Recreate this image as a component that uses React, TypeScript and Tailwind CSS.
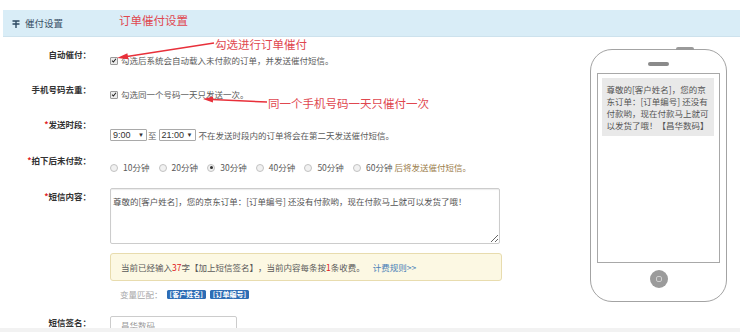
import React from 'react';

const Check = () => (
  <span className="inline-flex w-[8px] h-[8px] shrink-0 items-center justify-center rounded-[1px] border border-[#9a9a9a] bg-[#ececec]">
    <svg viewBox="0 0 8 8" className="w-[7px] h-[7px]">
      <path d="M1.4 4.2 L3.2 6 L6.6 1.6" stroke="#222" strokeWidth="1.4" fill="none" />
    </svg>
  </span>
);

const Radio = ({ on }: { on?: boolean }) => (
  <span className="inline-flex w-[8px] h-[8px] shrink-0 items-center justify-center rounded-full border border-[#c2c2c2] bg-[#f1f1f1]">
    {on && <span className="w-[3px] h-[3px] rounded-full bg-[#333]" />}
  </span>
);

const Select = ({ value }: { value: string }) => (
  <div className="flex items-center justify-between w-[37px] h-[12px] border border-[#a9a9a9] rounded-[1px] px-[2px] font-['Liberation_Sans',sans-serif] text-[9px] leading-[10px] text-[#333]">
    <span>{value}</span>
    <span className="text-[6px]">▼</span>
  </div>
);

const Label = ({ text, req, pt }: { text: string; req?: boolean; pt: string }) => (
  <div className={`text-right pr-[1px] font-bold text-[#333] ${pt}`}>
    {req && <span className="text-[#e02020]">*</span>}
    {text}
  </div>
);

const minutes = ['10', '20', '30', '40', '50'];

export default function App() {
  return (
    <div className="relative w-[740px] h-[332px] overflow-hidden bg-white text-[#5a5a5a] font-['Noto_Sans_CJK_SC',sans-serif] [text-spacing-trim:space-all]">
      <div className="mt-[10px] ml-[3px] h-[27px] flex items-center pl-[9px] bg-[#d9edf7] border-b border-[#cde2ed]">
        <svg viewBox="0 0 8 9" className="w-[8px] h-[9px]">
          <path d="M0.5 2 H7.5 M0.5 5 H7.5 M4 2 V9" stroke="#2e4a62" strokeWidth="1.4" fill="none" />
        </svg>
        <span className="ml-[5px] text-[9.5px] text-[#3b5268]">催付设置</span>
        <span className="ml-[56px] -mt-[4px] text-[11.5px] text-[#e0474f]">订单催付设置</span>
      </div>

      <div className="flex">
        <div className="w-[590px] text-[8.5px] leading-[11px]">
          <div className="grid grid-cols-[92px_1fr] gap-x-[18px] h-[35px]">
            <Label text="自动催付：" pt="pt-[12px]" />
            <div className="pt-[18px] flex items-center gap-[3px] h-[29px]">
              <Check />
              <span>勾选后系统会自动载入未付款的订单，并发送催付短信。</span>
            </div>
          </div>

          <div className="grid grid-cols-[92px_1fr] gap-x-[18px] h-[35px]">
            <Label text="手机号码去重：" pt="pt-[12px]" />
            <div className="pt-[17px] flex items-center gap-[3px] h-[28px]">
              <Check />
              <span>勾选同一个号码一天只发送一次。</span>
            </div>
          </div>

          <div className="grid grid-cols-[92px_1fr] gap-x-[18px] h-[37px]">
            <Label text="发送时段：" req pt="pt-[12px]" />
            <div className="pt-[19px] flex items-center">
              <Select value="9:00" />
              <span className="ml-[1px]">至</span>
              <span className="ml-[2px]"><Select value="21:00" /></span>
              <span className="ml-[3px]">不在发送时段内的订单将会在第二天发送催付短信。</span>
            </div>
          </div>

          <div className="grid grid-cols-[92px_1fr] gap-x-[18px] h-[36px]">
            <Label text="拍下后未付款：" req pt="pt-[11px]" />
            <div className="pt-[18px] flex items-start">
              {minutes.map((m) => (
                <div key={m} className="w-[48.6px] flex items-center gap-[5px] h-[11px]">
                  <Radio on={m === '30'} />
                  <span>{m}分钟</span>
                </div>
              ))}
              <div className="flex items-center gap-[5px] h-[11px]">
                <Radio />
                <span>60分钟</span>
              </div>
              <span className="ml-[2px] text-[#9b7d4b]">后将发送催付短信。</span>
            </div>
          </div>

          <div className="grid grid-cols-[92px_1fr] gap-x-[18px] h-[125px]">
            <Label text="短信内容：" req pt="pt-[11px]" />
            <div className="pt-[8px]">
              <textarea
                readOnly
                defaultValue="尊敬的[客户姓名]，您的京东订单：[订单编号] 还没有付款哟，现在付款马上就可以发货了哦！"
                className="block w-[390px] h-[56px] border border-[#cccccc] rounded-[2px] pt-[7px] pl-[2px] text-[8.5px] leading-[11px] text-[#555] shadow-[inset_0_1px_1px_rgba(0,0,0,0.08)] outline-none"
              />
              <div className="mt-[9px] w-[392px] h-[28px] flex items-center pl-[10px] bg-[#fcf8e3] border border-[#e8dcae] rounded-[3px]">
                <span>
                  当前已经输入<span className="text-[#e02020]">37</span>字【加上短信签名】，当前内容每条按
                  <span className="text-[#e02020]">1</span>条收费。
                </span>
                <span className="ml-[8px] text-[#4a80b8]">计费规则&gt;&gt;</span>
              </div>
              <div className="mt-[9px] pl-[10px] flex items-center h-[9px]">
                <span className="text-[#a8a8a8]">变量匹配：</span>
                <span className="ml-[4px] px-[3px] h-[9px] rounded-[1.5px] bg-[#2d6db5] text-white text-[7px] leading-[9px] font-bold">[客户姓名]</span>
                <span className="ml-[4px] px-[3px] h-[9px] rounded-[1.5px] bg-[#2d6db5] text-white text-[7px] leading-[9px] font-bold">[订单编号]</span>
              </div>
            </div>
          </div>

          <div className="grid grid-cols-[92px_1fr] gap-x-[18px] h-[40px]">
            <Label text="短信签名：" pt="pt-[12px]" />
            <div className="pt-[11px]">
              <div className="w-[127px] h-[26px] border border-[#cccccc] rounded-[2px] pl-[10px] pt-[3px] text-[#9a9a9a]">昌华数码</div>
            </div>
          </div>
        </div>

        <div className="pt-[12px]">
          <div className="relative w-[137px] h-[253px] rounded-[22px] border-[1.5px] border-[#a3a3a3] flex flex-col items-center">
            <span className="absolute -top-[3.5px] left-[85px] w-[18px] h-[3px] rounded-t-[2px] bg-[#9a9a9a]" />
            <span className="mt-[11.5px] w-[21px] h-[4px] rounded-full bg-[#8a8a8a]" />
            <div className="mt-[7px] w-[123px] h-[190px] border-[1.5px] border-[#a8a8a8] pl-[3.5px] pt-[4.5px]">
              <div className="w-[112px] h-[58px] bg-[#e9e9e9] pl-[5px] pt-[5px] text-[8.5px] leading-[12px] text-[#555] whitespace-nowrap">
                <div>尊敬的[客户姓名]，您的京</div>
                <div>东订单：[订单编号] 还没有</div>
                <div>付款哟，现在付款马上就可</div>
                <div>以发货了哦！【昌华数码】</div>
              </div>
            </div>
            <span className="mt-[7px] w-[18px] h-[18px] rounded-full bg-[#9b9b9b] flex items-center justify-center">
              <span className="w-[6px] h-[6px] rounded-[2px] border border-[#d0d0d0]" />
            </span>
          </div>
        </div>
      </div>

      <span className="absolute left-[215px] top-[37px] text-[11.5px] leading-[14px] text-[#e0474f]">勾选进行订单催付</span>
      <span className="absolute left-[268px] top-[96px] text-[11.5px] leading-[14px] text-[#e0474f]">同一个手机号码一天只催付一次</span>
      <svg className="absolute left-0 top-0 pointer-events-none" width="740" height="332">
        <line x1="214" y1="43" x2="127" y2="56.5" stroke="#e8303a" strokeWidth="1.5" />
        <polygon points="117,58 128.4,59.3 127.4,53.3" fill="#e8303a" />
        <line x1="267" y1="102" x2="212" y2="99.5" stroke="#e8303a" strokeWidth="1.5" />
        <polygon points="203,99 212.9,102.5 213.1,96.5" fill="#e8303a" />
      </svg>

      <div className="absolute left-0 right-0 bottom-0 h-[4px] bg-[#f2f2f2]" />
    </div>
  );
}
